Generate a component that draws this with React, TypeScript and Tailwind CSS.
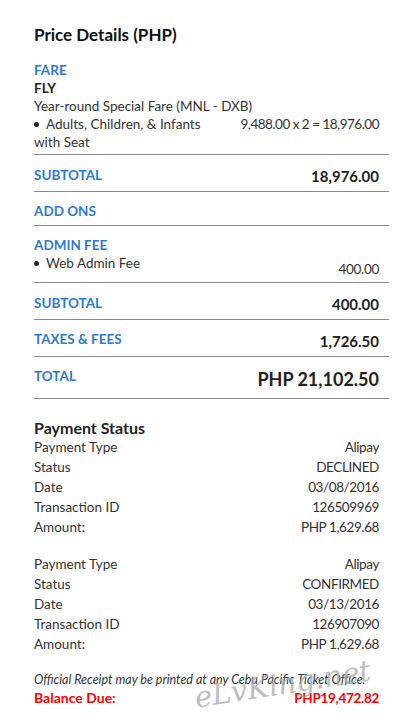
import React from 'react'

const blue = 'text-[#2f7bc9]'

function Row({ label, value }: { label: string; value: string }) {
    return (
        <div className="flex h-[20px] items-center justify-between pr-[10px]">
            <span>{label}</span>
            <span className="tracking-[-0.4px]">{value}</span>
        </div>
    )
}

function Payment({ status, date, id }: { status: string; date: string; id: string }) {
    return (
        <div>
            <Row label="Payment Type" value="Alipay" />
            <Row label="Status" value={status} />
            <Row label="Date" value={date} />
            <Row label="Transaction ID" value={id} />
            <Row label="Amount:" value="PHP 1,629.68" />
        </div>
    )
}

export default function App() {
    return (
        <div className="relative min-h-[720px] w-[398px] overflow-hidden bg-white pl-[34px] pr-[9px] pt-[25px] font-['Lato','Liberation_Sans',sans-serif] text-[13.5px] text-[#333]">
            <h2 className="text-[17px] font-bold leading-[20px] text-[#111]">Price Details (PHP)</h2>

            {/* Fare */}
            <div className="mt-[16px] border-b border-[#8a8a8a] pb-[3px] leading-[18px]">
                <div className={`font-bold ${blue}`}>FARE</div>
                <div className="font-bold text-[#222]">FLY</div>
                <div>Year-round Special Fare (MNL - DXB)</div>
                <div className="flex justify-between pr-[10px]">
                    <div className="w-[185px]">
                        <span className="mr-[7px] inline-block h-[5px] w-[5px] translate-y-[-2px] rounded-full bg-[#222]" />
                        Adults, Children, &amp; Infants with Seat
                    </div>
                    <span className="tracking-[-0.5px]">9,488.00 x 2 = 18,976.00</span>
                </div>
            </div>

            {/* Subtotal */}
            <div className="flex items-start justify-between border-b border-[#8a8a8a] pb-[6px] pr-[10px] pt-[11px] leading-[18px]">
                <span className={`font-bold ${blue}`}>SUBTOTAL</span>
                <span className="mt-[1px] text-[15px] font-bold text-[#222]">18,976.00</span>
            </div>

            {/* Add ons */}
            <div className="border-b border-[#8a8a8a] pb-[5px] pt-[10px] leading-[18px]">
                <span className={`font-bold ${blue}`}>ADD ONS</span>
            </div>

            {/* Admin fee */}
            <div className="border-b border-[#8a8a8a] pb-[4px] pt-[10px] leading-[18px]">
                <div className={`font-bold ${blue}`}>ADMIN FEE</div>
                <div className="flex items-start justify-between pr-[10px]">
                    <div>
                        <span className="mr-[7px] inline-block h-[5px] w-[5px] translate-y-[-2px] rounded-full bg-[#222]" />
                        Web Admin Fee
                    </div>
                    <span className="mt-[6px] tracking-[-0.3px]">400.00</span>
                </div>
            </div>

            {/* Subtotal 2 */}
            <div className="flex items-start justify-between border-b border-[#8a8a8a] pb-[6px] pr-[10px] pt-[11px] leading-[18px]">
                <span className={`font-bold ${blue}`}>SUBTOTAL</span>
                <span className="mt-[1px] text-[15px] font-bold text-[#222]">400.00</span>
            </div>

            {/* Taxes */}
            <div className="flex items-start justify-between border-b border-[#8a8a8a] pb-[6px] pr-[10px] pt-[10px] leading-[18px]">
                <span className={`font-bold ${blue}`}>TAXES &amp; FEES</span>
                <span className="mt-[2px] text-[15px] font-bold text-[#222]">1,726.50</span>
            </div>

            {/* Total */}
            <div className="flex items-start justify-between border-b border-[#8a8a8a] pb-[9px] pr-[10px] pt-[10px] leading-[18px]">
                <span className={`font-bold ${blue}`}>TOTAL</span>
                <span className="mt-[2px] text-[18px] font-bold leading-[20px] text-[#222]">PHP 21,102.50</span>
            </div>

            {/* Payment status */}
            <h3 className="mt-[20px] text-[16px] font-bold leading-[18px] text-[#222]">Payment Status</h3>
            <Payment status="DECLINED" date="03/08/2016" id="126509969" />
            <div className="mt-[17px]">
                <Payment status="CONFIRMED" date="03/13/2016" id="126907090" />
            </div>

            <p className="mt-[17px] text-[12.5px] italic leading-[18px]">
                Official Receipt may be printed at any Cebu Pacific Ticket Office.
            </p>
            <div className="flex justify-between pr-[10px] text-[14px] font-bold leading-[18px] text-[#ff0000]">
                <span>Balance Due:</span>
                <span className="text-[13.5px] tracking-[-0.3px]">PHP19,472.82</span>
            </div>

            {/* watermark */}
            <div className="pointer-events-none absolute left-[194px] top-[670px] -rotate-[9deg] font-['DejaVu_Serif',serif] text-[29px] italic leading-none text-[#a9a9a9] opacity-75">
                eLvKing.net
            </div>
        </div>
    )
}
